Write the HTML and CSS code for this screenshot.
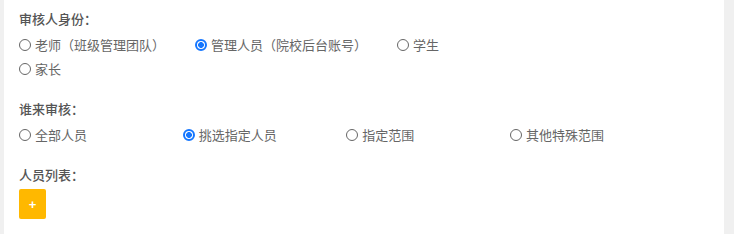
FILE: index.html
```html
<!DOCTYPE html>
<html lang="zh-CN">
<head>
<meta charset="utf-8">
<title>审核设置</title>
<link rel="stylesheet" href="styles.css">
</head>
<body>
<div class="panel">
  <div class="group">
    <div class="label">审核人身份：</div>
    <div class="options options-wrap">
      <label class="opt"><span class="radio"></span><span class="txt">老师（班级管理团队）</span></label>
      <label class="opt"><span class="radio checked"></span><span class="txt">管理人员（院校后台账号）</span></label>
      <label class="opt"><span class="radio"></span><span class="txt">学生</span></label>
      <label class="opt"><span class="radio"></span><span class="txt">家长</span></label>
    </div>
  </div>
  <div class="group">
    <div class="label">谁来审核：</div>
    <div class="options options-fixed">
      <label class="opt"><span class="radio"></span><span class="txt">全部人员</span></label>
      <label class="opt"><span class="radio checked"></span><span class="txt">挑选指定人员</span></label>
      <label class="opt"><span class="radio"></span><span class="txt">指定范围</span></label>
      <label class="opt"><span class="radio"></span><span class="txt">其他特殊范围</span></label>
    </div>
  </div>
  <div class="group last">
    <div class="label">人员列表：</div>
    <button class="add-btn" type="button">+</button>
  </div>
</div>
</body>
</html>
```
FILE: styles.css
```css
html, body {
  margin: 0;
  padding: 0;
}
body {
  background: #f0f0f0;
  padding: 0 10px 0 4px;
  height: 234px;
  box-sizing: border-box;
  font-family: "Noto Sans CJK SC", "Noto Sans", sans-serif;
  font-size: 13px;
  color: #555;
}
.panel {
  background: #fff;
  height: 100%;
  box-sizing: border-box;
  padding: 9px 15px 0 15px;
}
.group {
  margin-bottom: 18px;
}
.group.last {
  margin-bottom: 0;
}
.label {
  line-height: 20px;
  height: 20px;
  font-weight: 500;
  color: #555;
  margin-bottom: 4px;
}
.options {
  display: flex;
  flex-wrap: wrap;
}
.options-wrap {
  column-gap: 30px;
  max-width: 470px;
}
.options-fixed .opt {
  width: 163.67px;
}
.opt {
  display: flex;
  align-items: center;
  height: 24px;
  line-height: 24px;
  color: #666;
  white-space: nowrap;
}
.radio {
  box-sizing: border-box;
  width: 12px;
  height: 12px;
  border: 1px solid #666;
  border-radius: 50%;
  margin-right: 4px;
  flex: none;
}
.radio.checked {
  border: 2px solid #1677ff;
  background: radial-gradient(circle, #1677ff 0 2.6px, #fff 3.2px);
}
.add-btn {
  display: flex;
  align-items: center;
  justify-content: center;
  margin-top: 3px;
  width: 27px;
  height: 30px;
  padding: 0;
  border: none;
  border-radius: 2px;
  background: #ffb800;
  color: #fff;
  font-family: "Liberation Sans", sans-serif;
  font-size: 13px;
  font-weight: bold;
  line-height: 1;
}
```
